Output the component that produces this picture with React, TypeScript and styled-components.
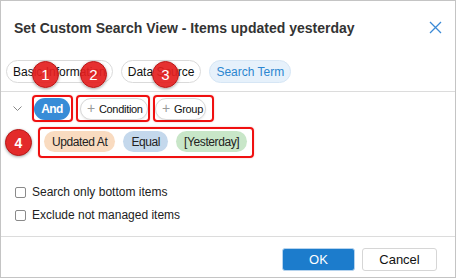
import React from "react";
import styled, { createGlobalStyle } from "styled-components";

const Global = createGlobalStyle`
  html, body { margin: 0; padding: 0; background: #fff; }
  body { font-family: "Liberation Sans", Arial, sans-serif; color: #222; }
  * { box-sizing: border-box; }
`;

const Dialog = styled.div`
  position: relative;
  width: 456px;
  height: 278px;
  border: 1px solid #c4c4c4;
  background: #fff;
  display: flex;
  flex-direction: column;
`;

const Header = styled.div`
  height: 53px;
  display: flex;
  align-items: center;
  justify-content: space-between;
  padding: 0 13px 0 13px;
`;

const Title = styled.h1`
  margin: 0;
  font-size: 14px;
  font-weight: bold;
  color: #333;
`;

const CloseBtn = styled.button`
  border: 0;
  background: none;
  padding: 0;
  width: 14px;
  height: 14px;
  display: flex;
  align-items: center;
  justify-content: center;
  cursor: pointer;
`;

const Tabs = styled.div`
  display: flex;
  gap: 8px;
  padding: 6px 0 0 5px;
  height: 38px;
  border-bottom: 1px solid #dcdcdc;
`;

const Tab = styled.div<{ $active?: boolean }>`
  height: 23px;
  padding: 0 6px;
  display: flex;
  align-items: center;
  border-radius: 12px;
  font-size: 12px;
  border: 1px solid ${(p) => (p.$active ? "#d6e6f5" : "#dadada")};
  background: ${(p) => (p.$active ? "#e6f1fb" : "#fff")};
  color: ${(p) => (p.$active ? "#2b86d0" : "#111")};
`;

const Body = styled.div`
  flex: 1;
  padding: 2px 0 0 0;
  display: flex;
  flex-direction: column;
`;

const RuleRow = styled.div`
  display: flex;
  align-items: center;
  padding-left: 12px;
  height: 28px;
`;

const Chevron = styled.span`
  width: 10px;
  display: flex;
  margin-right: 9px;
`;

const Highlight = styled.div<{ $pad: string }>`
  display: flex;
  align-items: center;
  gap: 8px;
  border: 2px solid #f01010;
  border-radius: 4px;
  padding: ${(p) => p.$pad};
  margin-right: 3px;
  box-shadow: 0 0 2px rgba(200, 0, 0, 0.25);
`;

const LogicPill = styled.div`
  height: 22px;
  width: 36px;
  border-radius: 11px;
  background: #378cd7;
  color: #fff;
  font-weight: bold;
  font-size: 12px;
  letter-spacing: -0.6px;
  display: flex;
  align-items: center;
  justify-content: center;
`;

const AddPill = styled.div<{ $w: number }>`
  height: 22px;
  width: ${(p) => p.$w}px;
  padding-left: 6px;
  border-radius: 11px;
  border: 1px solid #d8d8d8;
  background: #fff;
  color: #111;
  font-size: 11px;
  letter-spacing: -0.3px;
  display: flex;
  align-items: center;
  gap: 4px;
  box-shadow: 0 1px 2px rgba(0, 0, 0, 0.08);
`;

const Plus = styled.span`
  color: #9a9a9a;
  font-size: 14px;
  line-height: 1;
  margin-top: -1px;
`;

const CondRow = styled.div`
  display: flex;
  align-items: center;
  padding: 5px 0 0 4px;
  gap: 6px;
`;

const Badge = styled.div`
  width: 27px;
  height: 27px;
  border-radius: 50%;
  background: #e32a2a;
  border: 1px solid #b81818;
  color: #fff;
  font-weight: bold;
  font-size: 14px;
  display: flex;
  align-items: center;
  justify-content: center;
  box-shadow: 0 1px 3px rgba(0, 0, 0, 0.35);
  flex: none;
`;

const OverBadge = styled(Badge)<{ $x: number; $y: number }>`
  position: absolute;
  left: ${(p) => p.$x}px;
  top: ${(p) => p.$y}px;
  font-weight: normal;
  font-size: 15px;
  background: rgba(228, 30, 30, 0.92);
`;

const Token = styled.div<{ $bg: string }>`
  height: 21px;
  padding: 0 8px;
  border-radius: 11px;
  background: ${(p) => p.$bg};
  color: #222;
  font-size: 12px;
  letter-spacing: -0.4px;
  display: flex;
  align-items: center;
`;

const Options = styled.div`
  display: flex;
  flex-direction: column;
  gap: 9px;
  padding: 27px 0 0 14px;
`;

const CheckLabel = styled.label`
  display: flex;
  align-items: center;
  gap: 6px;
  font-size: 12px;
  color: #222;
  height: 14px;
`;

const Box = styled.span`
  width: 11px;
  height: 11px;
  border: 1px solid #8a8a8a;
  border-radius: 2px;
  background: #fff;
  display: inline-block;
`;

const Footer = styled.div`
  height: 41px;
  border-top: 1px solid #dcdcdc;
  display: flex;
  justify-content: flex-end;
  align-items: flex-start;
  gap: 7px;
  padding: 11px 18px 0 0;
`;

const Button = styled.button<{ $primary?: boolean }>`
  height: 23px;
  width: ${(p) => (p.$primary ? "73px" : "75px")};
  border-radius: 3px;
  font-family: inherit;
  font-size: 13px;
  border: 1px solid ${(p) => (p.$primary ? "#b5d3ee" : "#d6d6d6")};
  background: ${(p) => (p.$primary ? "#1c7ccc" : "#fff")};
  color: ${(p) => (p.$primary ? "#fff" : "#111")};
  display: flex;
  align-items: center;
  justify-content: center;
`;

export default function App() {
  return (
    <>
      <Global />
      <Dialog>
        <Header>
          <Title>Set Custom Search View - Items updated yesterday</Title>
          <CloseBtn aria-label="close">
            <svg width="13" height="13" viewBox="0 0 13 13">
              <path d="M1 1 L12 12 M12 1 L1 12" stroke="#3b8ad6" strokeWidth="1.3" />
            </svg>
          </CloseBtn>
        </Header>
        <Tabs>
          <Tab>Basic Information</Tab>
          <Tab>Data Source</Tab>
          <Tab $active>Search Term</Tab>
        </Tabs>
        <Body>
          <RuleRow>
            <Chevron>
              <svg width="9" height="5" viewBox="0 0 9 5">
                <path d="M0.5 0.5 L4.5 4.5 L8.5 0.5" fill="none" stroke="#888" strokeWidth="1" />
              </svg>
            </Chevron>
            <Highlight $pad="1px 1px 0 0">
              <LogicPill>And</LogicPill>
            </Highlight>
            <Highlight $pad="1px 0 0 2px">
              <AddPill $w={68}>
                <Plus>+</Plus>Condition
              </AddPill>
            </Highlight>
            <Highlight $pad="1px 6px 0 0">
              <AddPill $w={51}>
                <Plus>+</Plus>Group
              </AddPill>
            </Highlight>
          </RuleRow>
          <CondRow>
            <Badge>4</Badge>
            <Highlight $pad="2px 5px 4px 4px">
              <Token $bg="#f9dbc0">Updated At</Token>
              <Token $bg="#c4d8ec">Equal</Token>
              <Token $bg="#c8e6c8">[Yesterday]</Token>
            </Highlight>
          </CondRow>
          <Options>
            <CheckLabel>
              <Box />
              Search only bottom items
            </CheckLabel>
            <CheckLabel>
              <Box />
              Exclude not managed items
            </CheckLabel>
          </Options>
        </Body>
        <Footer>
          <Button $primary>OK</Button>
          <Button>Cancel</Button>
        </Footer>
        <OverBadge $x={31} $y={60}>1</OverBadge>
        <OverBadge $x={79} $y={60}>2</OverBadge>
        <OverBadge $x={151} $y={60}>3</OverBadge>
      </Dialog>
    </>
  );
}
